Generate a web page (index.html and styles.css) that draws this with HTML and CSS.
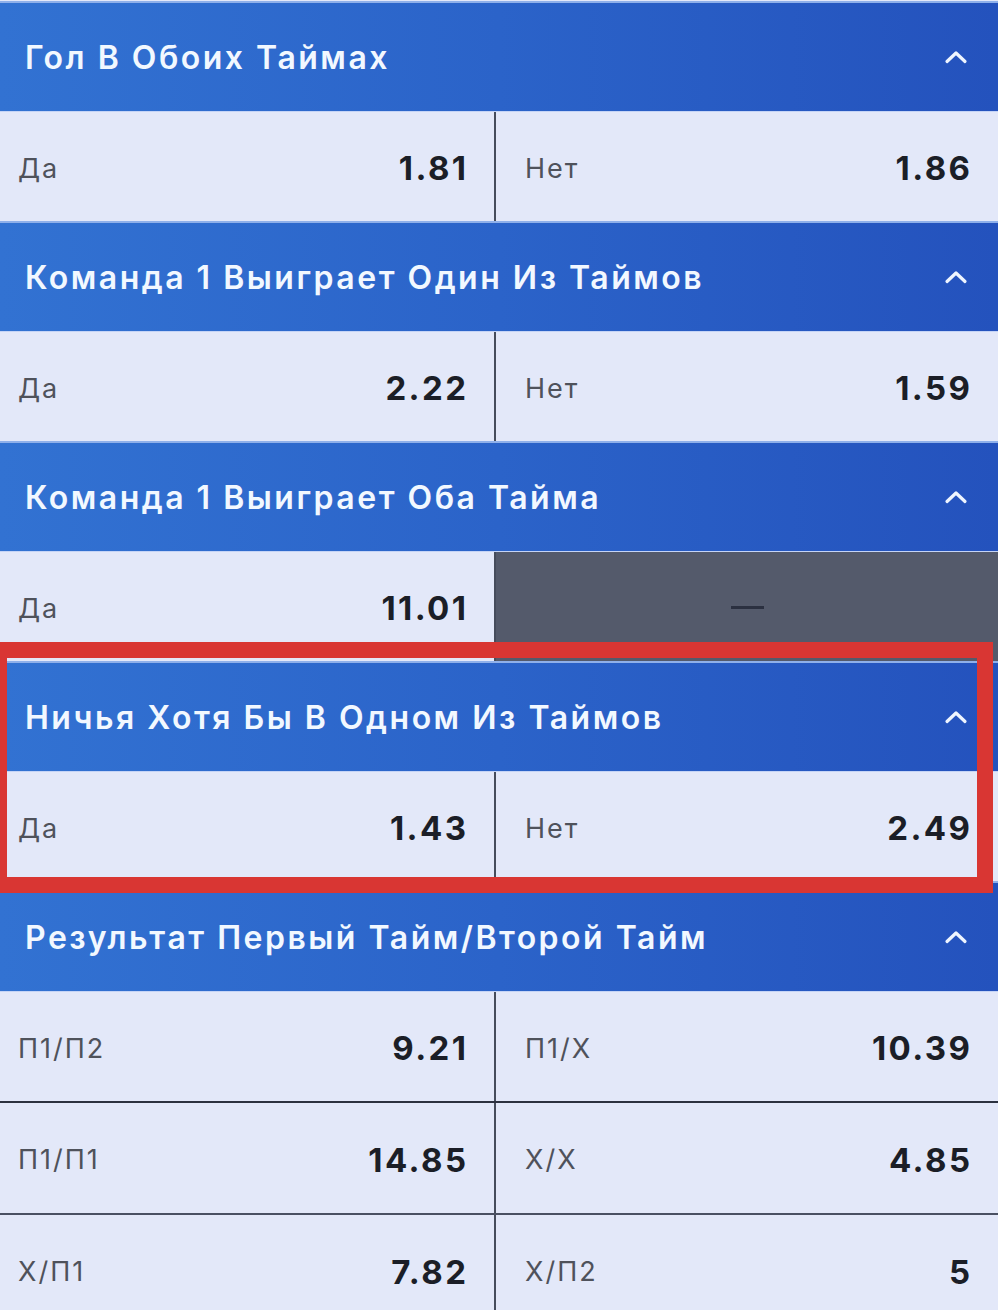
FILE: index.html
```html
<!DOCTYPE html>
<html lang="ru">
    <head>
        <meta charset="utf-8">
        <title>Ставки на матч</title>
        <meta name="viewport" content="width=device-width, initial-scale=1">
        <link rel="stylesheet" href="styles.css">
    </head>
    <body>
        <div class="markets">
            <section class="market">
                <div class="market-head">
                    <span class="market-title">Гол В Обоих Таймах</span>
                    <svg class="chevron" viewBox="0 0 24 14"><path d="M3 11.5 L12 3 L21 11.5"/></svg>
                </div>
                <div class="market-row">
                    <div class="odd"><span class="odd-label">Да</span><span class="odd-value">1.81</span></div>
                    <div class="odd"><span class="odd-label">Нет</span><span class="odd-value">1.86</span></div>
                </div>
            </section>
            <section class="market">
                <div class="market-head">
                    <span class="market-title">Команда 1 Выиграет Один Из Таймов</span>
                    <svg class="chevron" viewBox="0 0 24 14"><path d="M3 11.5 L12 3 L21 11.5"/></svg>
                </div>
                <div class="market-row">
                    <div class="odd"><span class="odd-label">Да</span><span class="odd-value">2.22</span></div>
                    <div class="odd"><span class="odd-label">Нет</span><span class="odd-value">1.59</span></div>
                </div>
            </section>
            <section class="market">
                <div class="market-head">
                    <span class="market-title">Команда 1 Выиграет Оба Тайма</span>
                    <svg class="chevron" viewBox="0 0 24 14"><path d="M3 11.5 L12 3 L21 11.5"/></svg>
                </div>
                <div class="market-row">
                    <div class="odd"><span class="odd-label">Да</span><span class="odd-value">11.01</span></div>
                    <div class="odd odd-locked"><span class="dash"></span></div>
                </div>
            </section>
            <section class="market market-marked">
                <div class="market-head">
                    <span class="market-title">Ничья Хотя Бы В Одном Из Таймов</span>
                    <svg class="chevron" viewBox="0 0 24 14"><path d="M3 11.5 L12 3 L21 11.5"/></svg>
                </div>
                <div class="market-row">
                    <div class="odd"><span class="odd-label">Да</span><span class="odd-value">1.43</span></div>
                    <div class="odd"><span class="odd-label">Нет</span><span class="odd-value">2.49</span></div>
                </div>
            </section>
            <section class="market">
                <div class="market-head">
                    <span class="market-title">Результат Первый Тайм/Второй Тайм</span>
                    <svg class="chevron" viewBox="0 0 24 14"><path d="M3 11.5 L12 3 L21 11.5"/></svg>
                </div>
                <div class="market-row">
                    <div class="odd"><span class="odd-label">П1/П2</span><span class="odd-value">9.21</span></div>
                    <div class="odd"><span class="odd-label">П1/Х</span><span class="odd-value">10.39</span></div>
                </div>
                <div class="market-row">
                    <div class="odd"><span class="odd-label">П1/П1</span><span class="odd-value">14.85</span></div>
                    <div class="odd"><span class="odd-label">Х/Х</span><span class="odd-value">4.85</span></div>
                </div>
                <div class="market-row">
                    <div class="odd"><span class="odd-label">Х/П1</span><span class="odd-value">7.82</span></div>
                    <div class="odd"><span class="odd-label">Х/П2</span><span class="odd-value">5</span></div>
                </div>
            </section>
        </div>
    </body>
</html>
```
FILE: styles.css
```css
* {
    margin: 0;
    padding: 0;
    box-sizing: border-box;
}
body {
    background: #e3e8f9;
    font-family: Inter, "Noto Sans", sans-serif;
    overflow: hidden;
}
.markets {
    padding-top: 1px;
}
.market-marked {
    position: relative;
}
.market-marked::after {
    content: "";
    position: absolute;
    top: -19px;
    left: -9px;
    right: 5px;
    bottom: -12px;
    border: 16px solid #d93633;
    pointer-events: none;
}
.market-head {
    display: flex;
    align-items: center;
    justify-content: space-between;
    height: 110px;
    padding: 0 30px 0 25px;
    border-top: 2px solid #8fb0ea;
    background: linear-gradient(90deg, #3272d2 0%, #2b63c9 50%, #2452bd 100%);
}
.market-title {
    color: #f2f8ff;
    font-size: 32px;
    font-weight: 600;
    letter-spacing: 2.5px;
}
.chevron {
    width: 24px;
    height: 14px;
    fill: none;
    stroke: #eef5ff;
    stroke-width: 3.2;
    stroke-linecap: round;
    stroke-linejoin: round;
}
.market-row {
    display: flex;
    height: 110px;
    border-top: 1px solid #c5d4f6;
    background: #e3e8f9;
}
.market-row + .market-row {
    height: 112px;
    border-top: 2px solid #2c3140;
}
.market-row + .market-row + .market-row {
    border-top-color: #4a5062;
}
.odd {
    flex: 1;
    display: flex;
    align-items: center;
    justify-content: space-between;
    padding: 3px 28px 0 29px;
}
.odd:first-child {
    flex: 0 0 496px;
    padding-left: 18px;
    border-right: 2.5px solid #464c5c;
}
.odd-label {
    color: #4f525b;
    font-size: 27px;
    letter-spacing: 2px;
}
.odd-value {
    color: #1b1e27;
    font-size: 33px;
    font-weight: 700;
    letter-spacing: 2.4px;
    margin-right: -2.4px;
}
.odd-locked {
    justify-content: center;
    background: #545a6b;
    padding: 0;
}
.dash {
    display: block;
    width: 33px;
    height: 3px;
    margin-top: 2px;
    background: #2b3040;
}
```
